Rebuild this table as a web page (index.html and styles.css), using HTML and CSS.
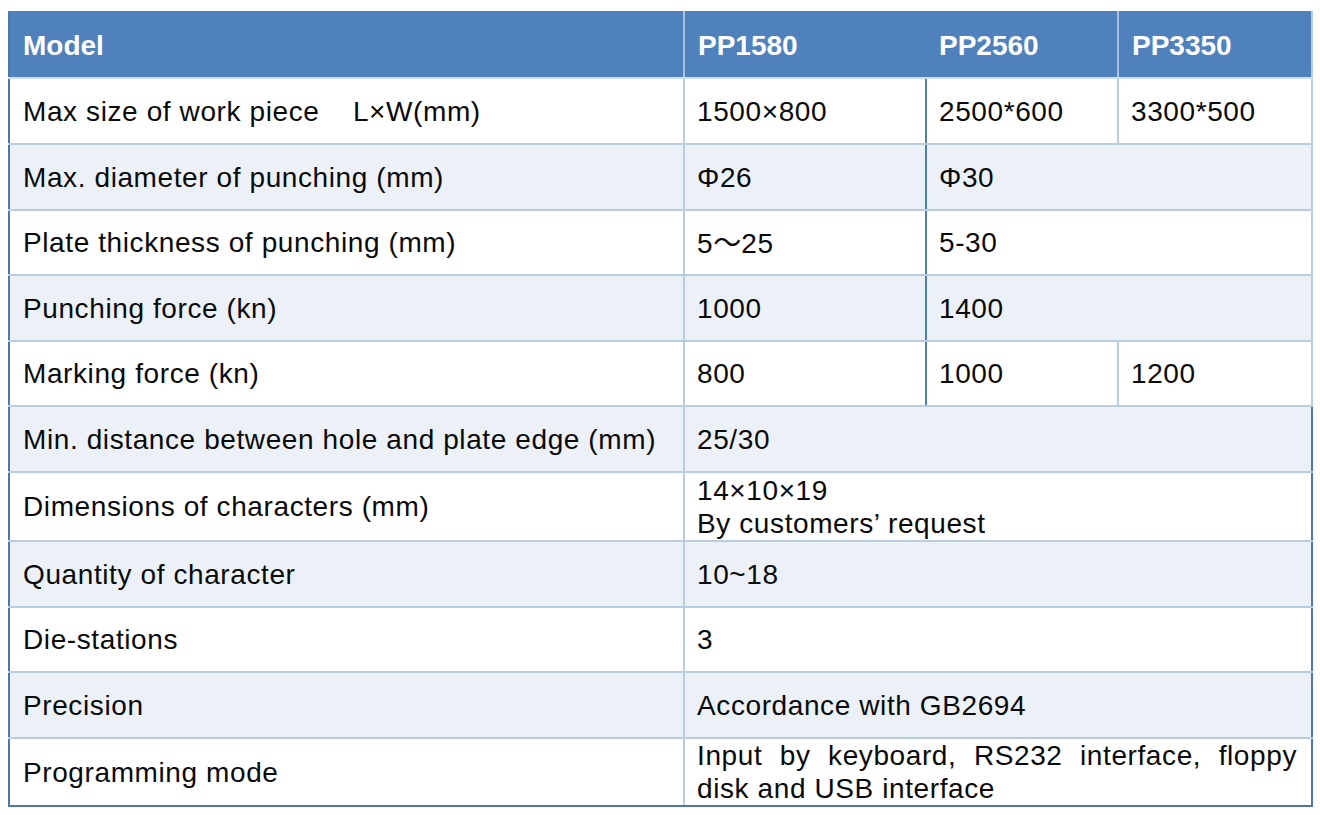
FILE: index.html
```html
<!DOCTYPE html>
<html lang="en">
<head>
<meta charset="utf-8">
<title>Specifications</title>
<link rel="stylesheet" href="styles.css">
</head>
<body>
<table class="spec">
  <colgroup>
    <col class="c1"><col class="c2"><col class="c3"><col class="c4">
  </colgroup>
  <thead>
    <tr class="head">
      <th class="h-model">Model</th>
      <th class="h-a">PP1580</th>
      <th class="h-b">PP2560</th>
      <th class="h-c">PP3350</th>
    </tr>
  </thead>
  <tbody>
    <tr class="r66 odd">
      <td class="lbl">Max size of work piece&nbsp;&nbsp;&nbsp; L×W(mm)</td>
      <td class="v dark-rr">1500×800</td>
      <td class="v dark-l">2500*600</td>
      <td class="v last lite-r">3300*500</td>
    </tr>
    <tr class="r66 even">
      <td class="lbl">Max. diameter of punching (mm)</td>
      <td class="v dark-rr">Φ26</td>
      <td class="v dark-l last lite-r" colspan="2">Φ30</td>
    </tr>
    <tr class="r65 odd">
      <td class="lbl">Plate thickness of punching (mm)</td>
      <td class="v dark-rr">5<span class="cjk">～</span>25</td>
      <td class="v dark-l last lite-r" colspan="2">5-30</td>
    </tr>
    <tr class="r66 even">
      <td class="lbl">Punching force (kn)</td>
      <td class="v dark-rr">1000</td>
      <td class="v dark-l last lite-r" colspan="2">1400</td>
    </tr>
    <tr class="r65 odd">
      <td class="lbl">Marking force (kn)</td>
      <td class="v dark-rr">800</td>
      <td class="v dark-l">1000</td>
      <td class="v last lite-r">1200</td>
    </tr>
    <tr class="r66 even">
      <td class="lbl">Min. distance between hole and plate edge (mm)</td>
      <td class="v last dark-r" colspan="3">25/30</td>
    </tr>
    <tr class="r69 odd">
      <td class="lbl">Dimensions of characters (mm)</td>
      <td class="v last dark-r" colspan="3"><div>14×10×19</div><div>By customers’ request</div></td>
    </tr>
    <tr class="r66 even">
      <td class="lbl">Quantity of character</td>
      <td class="v last dark-r" colspan="3">10~18</td>
    </tr>
    <tr class="r65 odd">
      <td class="lbl">Die-stations</td>
      <td class="v last dark-r" colspan="3">3</td>
    </tr>
    <tr class="r66 even">
      <td class="lbl">Precision</td>
      <td class="v last dark-r" colspan="3">Accordance with GB2694</td>
    </tr>
    <tr class="r68 odd bottom">
      <td class="lbl">Programming mode</td>
      <td class="v last dark-r prog" colspan="3"><div class="just">Input by keyboard, RS232 interface, floppy</div><div>disk and USB interface</div></td>
    </tr>
  </tbody>
</table>
</body>
</html>
```

FILE: styles.css
```css
html, body {
  margin: 0;
  padding: 0;
  background: #ffffff;
}

body {
  padding: 11px 0 0 8px;
}

.spec {
  border-collapse: collapse;
  table-layout: fixed;
  width: 1303px;
  font-family: "Liberation Sans", Arial, "Noto Sans CJK SC", sans-serif;
  font-size: 28px;
  line-height: 33px;
  color: #0a0a0a;
}

.c1 { width: 675px; }
.c2 { width: 242px; }
.c3 { width: 192px; }
.c4 { width: 194px; }

.cjk {
  font-family: "Noto Sans CJK SC", sans-serif;
  letter-spacing: 0;
}

/* Header */
.head {
  height: 66px;
}

.head th {
  background: #4f81bd;
  color: #ffffff;
  font-weight: bold;
  text-align: left;
  vertical-align: middle;
  padding: 0 14px 0 13px;
  border-top: 2px solid #4f81bd;
  border-bottom: 2px solid #d3dfee;
}

.head .h-model {
  border-left: 2px solid #4a78ad;
  border-right: 2px solid #a9c1de;
}

.head .h-a {
  border-right: none;
}

.head .h-b {
  border-left: none;
  border-right: 2px solid #a9c1de;
}

.head .h-c {
  border-right: 2px solid #b8cce4;
}

/* Body */
.r65 { height: 65px; }
.r66 { height: 66px; }
.r68 { height: 68px; }
.r69 { height: 69px; }

.odd td { background: #ffffff; }
.even td { background: #ecf1f8; }

.spec td {
  vertical-align: middle;
  padding: 0 14px 0 12px;
  letter-spacing: 0.6px;
  border-top: 2px solid #b8cce4;
  border-bottom: 2px solid #b8cce4;
  border-right: 2px solid #b8cce4;
}

.spec td.lbl {
  border-left: 2px solid #4a78ad;
  padding-left: 13px;
}

.spec td.dark-rr {
  border-right: 2px solid #4f7db5;
}

.spec td.dark-l {
  border-left: 2px solid #4f7db5;
}

.spec td.lite-r {
  border-right: 2px solid #b8cce4;
}

.spec td.dark-r {
  border-right: 2px solid #4a78ad;
}

.bottom td {
  border-bottom: 2px solid #4a78ad;
}

.spec td.prog {
  padding-right: 14px;
}

.just {
  text-align: justify;
  text-align-last: justify;
}
```
